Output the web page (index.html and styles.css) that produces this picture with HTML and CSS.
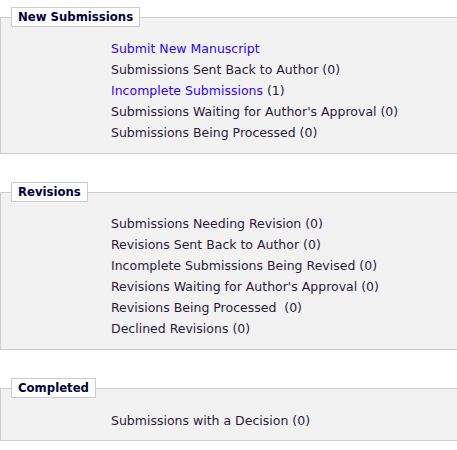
FILE: index.html
```html
<!DOCTYPE html>
<html>
<head>
<meta charset="utf-8">
<link rel="stylesheet" href="styles.css">
</head>
<body>
<fieldset class="box">
  <legend class="box-title">New Submissions</legend>
  <ul class="items">
    <li><a class="link" href="#">Submit New Manuscript</a></li>
    <li>Submissions Sent Back to Author (0)</li>
    <li><a class="link" href="#">Incomplete Submissions</a> (1)</li>
    <li>Submissions Waiting for Author's Approval (0)</li>
    <li>Submissions Being Processed (0)</li>
  </ul>
</fieldset>
<fieldset class="box">
  <legend class="box-title">Revisions</legend>
  <ul class="items">
    <li>Submissions Needing Revision (0)</li>
    <li>Revisions Sent Back to Author (0)</li>
    <li>Incomplete Submissions Being Revised (0)</li>
    <li>Revisions Waiting for Author's Approval (0)</li>
    <li>Revisions Being Processed &nbsp;(0)</li>
    <li>Declined Revisions (0)</li>
  </ul>
</fieldset>
<fieldset class="box">
  <legend class="box-title">Completed</legend>
  <ul class="items items-last">
    <li>Submissions with a Decision (0)</li>
  </ul>
</fieldset>
</body>
</html>
```
FILE: styles.css
```css
html, body {
  margin: 0;
  background: #ffffff;
  overflow: hidden;
}
body {
  padding-top: 7px;
  font-family: "DejaVu Sans", Verdana, sans-serif;
  font-size: 12.5px;
  color: #2a1a3a;
}
.box {
  margin: 0 0 28px 0;
  padding: 0 0 0 10px;
  border: 1px solid #cccccc;
  border-right: none;
  background: #f2f2f2;
  min-width: 0;
}
.box-title {
  margin: 0;
  padding: 0 6px 0 6px;
  border: 1px solid #cccccc;
  background: #ffffff;
  font-weight: bold;
  font-size: 11.7px;
  line-height: 18px;
  color: #000040;
}
.items {
  list-style: none;
  margin: 0;
  padding: 11px 0 10px 100px;
}
.items-last {
  padding-top: 12px;
  padding-bottom: 9px;
}
.items li {
  line-height: 21px;
}
.link {
  color: #3300ff;
  text-decoration: none;
}
```
